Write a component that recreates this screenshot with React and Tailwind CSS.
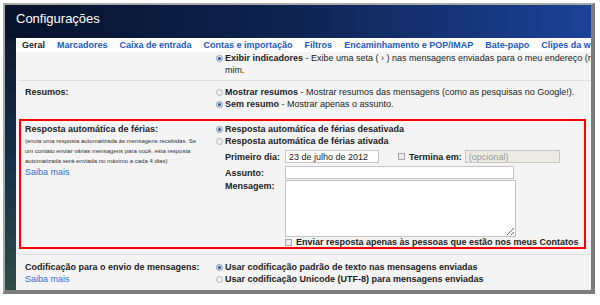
import React from 'react';

const Radio = ({ checked }) => (
    <span
        className={`inline-flex items-center justify-center shrink-0 w-[7px] h-[7px] rounded-full border ${
            checked ? 'border-[#8a9bb5] bg-[#dfe6f0]' : 'border-[#b5b5b5] bg-[#f0f0f0]'
        }`}
    >
        {checked && <span className="block w-[3px] h-[3px] rounded-full bg-[#2a4f8f]" />}
    </span>
);

const Check = () => (
    <span className="inline-block shrink-0 w-[7px] h-[7px] border border-[#a8a8a8] bg-[#ececec]" />
);

const Option = ({ checked, bold, children }) => (
    <div className="flex items-center h-[12px] whitespace-nowrap">
        <Radio checked={checked} />
        <span className="ml-[2px]">
            <b>{bold}</b>
            {children}
        </span>
    </div>
);

const tabs = [
    'Marcadores',
    'Caixa de entrada',
    'Contas e importação',
    'Filtros',
    'Encaminhamento e POP/IMAP',
    'Bate-papo',
    'Clipes da web',
    'Labs',
];

const App = () => {
    return (
        <div className="w-[600px] h-[305px] bg-white pt-[3px] pl-[3px] font-['Liberation_Sans',Arial,sans-serif] text-[9px] leading-[12px] text-[#222]">
            <div className="w-[592px] h-[291px] border-t-2 border-l-2 border-r-4 border-b-4 border-t-[#a9a9a9] border-l-[#a9a9a9] border-r-[#7c7c7c] border-b-[#7c7c7c] flex flex-col overflow-hidden">
                {/* Header */}
                <div className="h-[33px] shrink-0 bg-linear-to-r from-[#08122b] via-[#0f2452] to-[#1c4298] pl-[11px] pt-[6px]">
                    <h1 className="text-[13px] leading-[16px] text-white">Configurações</h1>
                </div>

                <div className="flex flex-1 min-h-0">
                    {/* Background strip */}
                    <div className="w-[11px] shrink-0 bg-linear-to-b from-[#0b1b33] via-[#15304a] to-[#2f4c45]" />

                    <div className="flex-1 min-w-0 flex flex-col">
                        {/* Tabs */}
                        <div className="h-[14px] shrink-0 bg-white flex items-center whitespace-nowrap overflow-hidden font-bold">
                            <span className="px-[6px] text-[#222]">Geral</span>
                            {tabs.map((t) => (
                                <span key={t} className="px-[6px] text-[#2157c4]">
                                    {t}
                                </span>
                            ))}
                        </div>

                        {/* Content */}
                        <div className="flex-1 bg-[#f4f4f4] overflow-hidden">
                            {/* Indicadores */}
                            <div className="flex pb-[4px]">
                                <div className="w-[197px] shrink-0" />
                                <div className="flex-1 min-w-0 pl-[3px] overflow-hidden">
                                    <Option checked bold="Exibir indicadores">
                                        {' '}- Exibe uma seta ( › ) nas mensagens enviadas para o meu endereço (não para uma lista de distribuição) e uma seta dupla ( » ) nas mensagens enviadas somente para
                                    </Option>
                                    <div className="pl-[9px]">mim.</div>
                                </div>
                            </div>
                            <div className="h-px ml-[2px] bg-[#e0e0e0]" />

                            {/* Resumos */}
                            <div className="flex pt-[5px] pb-[9px]">
                                <div className="w-[197px] shrink-0 pl-[9px] font-bold">Resumos:</div>
                                <div className="flex-1 min-w-0 pl-[3px]">
                                    <Option bold="Mostrar resumos">
                                        {' '}- Mostrar resumos das mensagens (como as pesquisas no Google!).
                                    </Option>
                                    <Option checked bold="Sem resumo">
                                        {' '}- Mostrar apenas o assunto.
                                    </Option>
                                </div>
                            </div>

                            {/* Resposta automática (highlighted) */}
                            <div className="ml-[3px] mr-[5px] border-2 border-[#ff0000] flex pt-[2px]">
                                <div className="w-[192px] shrink-0 pl-[4px]">
                                    <div className="font-bold">Resposta automática de férias:</div>
                                    <div className="mt-[1px] text-[6px] leading-[10px] whitespace-nowrap text-[#333]">
                                        (envia uma resposta automatizada às mensagens recebidas. Se
                                        <br />
                                        um contato enviar várias mensagens para você, esta resposta
                                        <br />
                                        automatizada será enviada no máximo a cada 4 dias)
                                    </div>
                                    <a className="block text-[#3a6bd4]">Saiba mais</a>
                                </div>
                                <div className="flex-1 min-w-0 pl-[3px]">
                                    <Option checked bold="Resposta automática de férias desativada" />
                                    <Option bold="Resposta automática de férias ativada" />

                                    <div className="flex items-center mt-[3px] h-[13px]">
                                        <label className="w-[69px] shrink-0 pl-[9px] font-bold">Primeiro dia:</label>
                                        <input
                                            defaultValue="23 de julho de 2012"
                                            className="w-[94px] h-[13px] border border-[#c4c4c4] bg-white pl-[3px] text-[9px] outline-none"
                                        />
                                        <span className="ml-[19px]">
                                            <Check />
                                        </span>
                                        <span className="ml-[4px] font-bold">Termina em:</span>
                                        <input
                                            disabled
                                            placeholder="(opcional)"
                                            className="ml-[3px] w-[95px] h-[13px] border border-[#c8c8c0] bg-[#ebebe4] pl-[3px] text-[9px] placeholder:text-[#999] outline-none"
                                        />
                                    </div>

                                    <div className="flex items-center mt-[3px] h-[13px]">
                                        <label className="w-[69px] shrink-0 pl-[9px] font-bold">Assunto:</label>
                                        <input className="w-[229px] h-[13px] border border-[#c4c4c4] bg-white outline-none" />
                                    </div>

                                    <div className="flex items-start mt-[1px]">
                                        <label className="w-[69px] shrink-0 pl-[9px] font-bold">Mensagem:</label>
                                        <textarea className="w-[231px] h-[57px] border border-[#c4c4c4] bg-white outline-none" />
                                    </div>

                                    <div className="flex items-center h-[10px] leading-[10px] pl-[69px] whitespace-nowrap">
                                        <Check />
                                        <span className="ml-[4px] font-bold">
                                            Enviar resposta apenas às pessoas que estão nos meus Contatos
                                        </span>
                                    </div>
                                </div>
                            </div>

                            <div className="h-px ml-[2px] mt-[5px] bg-[#e0e0e0]" />

                            {/* Codificação */}
                            <div className="flex pt-[6px]">
                                <div className="w-[197px] shrink-0 pl-[9px]">
                                    <div className="font-bold">Codificação para o envio de mensagens:</div>
                                    <a className="block text-[#3a6bd4]">Saiba mais</a>
                                </div>
                                <div className="flex-1 min-w-0 pl-[3px] font-bold">
                                    <Option checked bold="Usar codificação padrão de texto nas mensagens enviadas" />
                                    <Option bold="Usar codificação Unicode (UTF-8) para mensagens enviadas" />
                                </div>
                            </div>
                        </div>
                    </div>
                </div>
            </div>
        </div>
    );
};

export default App;
